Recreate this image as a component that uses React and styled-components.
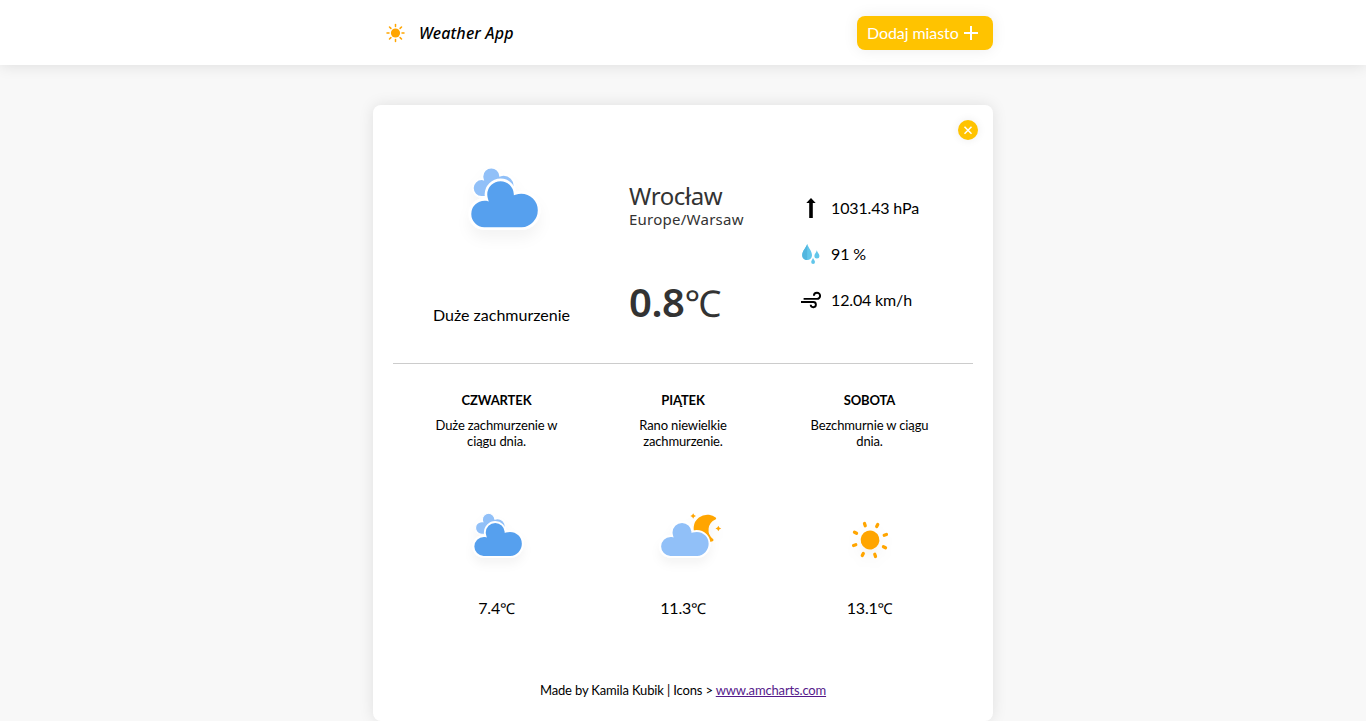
import React from "react";
import styled, { createGlobalStyle } from "styled-components";

const GlobalStyle = createGlobalStyle`
  *, *::before, *::after { box-sizing: border-box; }
  body {
    margin: 0;
    background: #f8f8f8;
    font-family: Lato, sans-serif;
    font-size: 16px;
    line-height: 19px;
    color: #000;
    overflow: hidden;
  }
  h1, h2, h3, p { margin: 0; font-weight: 400; }
  svg { display: block; flex: none; }
`;

const Header = styled.header`
  height: 65px;
  background: #fff;
  box-shadow: 0 0 15px rgba(0, 0, 0, 0.12);
`;

const HeaderInner = styled.div`
  width: 620px;
  height: 100%;
  margin: 0 auto;
  padding-left: 12px;
  display: flex;
  align-items: center;
  justify-content: space-between;
`;

const Brand = styled.div`
  display: flex;
  align-items: center;
  gap: 13px;
`;

const BrandName = styled.h1`
  font: italic 500 16px/20px "Noto Sans", sans-serif;
  letter-spacing: 0.17px;
  white-space: nowrap;
`;

const AddButton = styled.button`
  width: 136px;
  height: 34px;
  padding: 0 0 0 10px;
  border: 0;
  border-radius: 8px;
  background: #ffc300;
  box-shadow: 0 0 15px rgba(0, 0, 0, 0.08);
  color: #fff;
  font: 16px/19px Lato, sans-serif;
  letter-spacing: -0.08px;
  display: flex;
  align-items: center;
  gap: 4px;
  white-space: nowrap;
`;

const Card = styled.main`
  position: relative;
  width: 620px;
  height: 616px;
  margin: 40px auto 0;
  padding: 0 20px;
  border-radius: 8px;
  background: #fff;
  box-shadow: 0 0 15px rgba(0, 0, 0, 0.1);
`;

const CloseButton = styled.button`
  position: absolute;
  top: 15px;
  right: 15px;
  width: 20px;
  height: 20px;
  padding: 0;
  border: 0;
  border-radius: 50%;
  background: #ffc300;
  box-shadow: 0 0 10px rgba(0, 0, 0, 0.08);
  display: grid;
  place-items: center;
`;

const Current = styled.section`
  height: 259px;
  padding: 30px 0 0 40px;
  border-bottom: 1px solid #ccc;
  display: flex;
  align-items: flex-start;
`;

const Condition = styled.div`
  width: 140px;
  display: flex;
  flex-direction: column;
  align-items: center;
  gap: 30px;
  white-space: nowrap;

  p { margin-right: 3px; }
`;

const Place = styled.div`
  width: 172px;
  margin: 46px 0 0 56px;
  color: #333;
  font-family: "Noto Sans", sans-serif;
`;

const City = styled.h2`
  font-size: 24px;
  line-height: 29px;
  letter-spacing: -0.4px;
`;

const Zone = styled.p`
  font-size: 15px;
  line-height: 18px;
  letter-spacing: 0.25px;
`;

const Temperature = styled.p`
  margin-top: 51px;
  font-size: 40px;
  line-height: 46px;
  font-weight: 600;
  letter-spacing: -0.4px;
  white-space: nowrap;
`;

const Degree = styled.span`
  display: inline-block;
  font-family: "Noto Sans", sans-serif;
  font-size: ${({ $size }) => $size}px;
  line-height: 1;
  font-weight: 400;
`;

const Details = styled.div`
  margin-top: 63px;
  display: flex;
  flex-direction: column;
  gap: 26px;
`;

const Detail = styled.div`
  height: 20px;
  display: flex;
  align-items: center;
  gap: 10px;
  line-height: 18px;
  letter-spacing: -0.15px;
  white-space: nowrap;
`;

const Forecast = styled.section`
  padding: 27px 10px 0;
  display: grid;
  grid-template-columns: repeat(3, 186.5px);
  justify-content: center;
`;

const Day = styled.article`
  display: flex;
  flex-direction: column;
  align-items: center;
  text-align: center;
`;

const DayName = styled.h3`
  font-size: 13px;
  line-height: 18px;
  font-weight: 700;
  letter-spacing: -0.12px;
  text-transform: uppercase;
`;

const Summary = styled.p`
  width: 130px;
  height: 32px;
  margin: 8px 0 41px;
  font-size: 13px;
  line-height: 16px;
  letter-spacing: -0.14px;
`;

const DayTemp = styled.p`
  height: 19px;
  margin-top: 8px;
  letter-spacing: -0.2px;
  white-space: nowrap;
`;

const Footer = styled.footer`
  margin-top: 65px;
  text-align: center;
  font-size: 13px;
  line-height: 16px;
  letter-spacing: -0.15px;
`;

const FooterLink = styled.a`
  color: #551a8b;
  text-decoration: underline;
`;

const CLOUD =
  "M47.7,35.4c0-4.6-3.7-8.2-8.2-8.2c-1,0-1.9,0.2-2.8,0.5c-0.3-3.4-3.1-6.2-6.6-6.2c-3.7,0-6.7,3-6.7,6.7c0,0.8,0.2,1.6,0.4,2.3c-0.3-0.1-0.7-0.1-1-0.1c-3.7,0-6.7,3-6.7,6.7c0,3.6,2.9,6.6,6.5,6.7l17.2,0C44.2,43.6,47.7,39.8,47.7,35.4z";
const STAR = "0,-1.8 0.6,-0.6 1.8,0 0.6,0.6 0,1.8 -0.6,0.6 -1.8,0 -0.6,-0.6";
const RAYS = [0, 45, 90, 135, 180, 225, 270, 315];

function IconFrame({ id, size, children }) {
  return (
    <svg width={size} height={size} viewBox="0 0 64 64">
      <defs>
        <filter id={id} x="-30%" y="-30%" width="160%" height="180%">
          <feDropShadow dx="0" dy="4" stdDeviation="3" floodColor="#000" floodOpacity="0.045" />
        </filter>
      </defs>
      <g filter={`url(#${id})`}>{children}</g>
    </svg>
  );
}

function Cloudy({ id, size }) {
  return (
    <IconFrame id={id} size={size}>
      <path d={CLOUD} fill="#91c0f8" stroke="#fff" strokeWidth="1.2" transform="translate(8.6 2) scale(.6)" />
      <path d={CLOUD} fill="#57a0ee" stroke="#fff" strokeWidth="1.2" transform="translate(0.8 -1)" />
    </IconFrame>
  );
}

function CloudyNight({ id, size }) {
  return (
    <IconFrame id={id} size={size}>
      <path
        d="M14.5,13.2c0-3.7,2-6.9,5-8.7c-1.5-0.9-3.2-1.3-5-1.3c-5.5,0-10,4.5-10,10s4.5,10,10,10c1.8,0,3.5-0.5,5-1.3C16.5,20.2,14.5,16.9,14.5,13.2z"
        fill="orange"
        stroke="orange"
        strokeWidth="2"
        strokeLinejoin="round"
        transform="translate(47.6 24.6) rotate(7) scale(.8) translate(-14.5 -13.2)"
      />
      <polygon points={STAR} fill="orange" transform="translate(38.5 16.6)" />
      <polygon points={STAR} fill="orange" transform="translate(54.6 24.6)" />
      <path d={CLOUD} fill="#91c0f8" stroke="#fff" strokeWidth="1.2" transform="translate(1.3 -1)" />
    </IconFrame>
  );
}

function Sunny({ id, size }) {
  return (
    <IconFrame id={id} size={size}>
      <g transform="translate(32 32) rotate(26.5)" stroke="orange" strokeWidth="2" strokeLinecap="round">
        <circle r="5" fill="orange" />
        {RAYS.map((a) => (
          <line key={a} y1="9.6" y2="11.1" strokeWidth="2.1" transform={`rotate(${a})`} />
        ))}
      </g>
    </IconFrame>
  );
}

function LogoSun() {
  return (
    <svg width="21" height="20" viewBox="-10.5 -10 21 20">
      <circle r="4.6" fill="orange" />
      {RAYS.map((a) => (
        <line key={a} y1="6.5" y2="8.5" stroke="orange" strokeWidth="1.5" strokeLinecap="round" transform={`rotate(${a})`} />
      ))}
    </svg>
  );
}

function PlusIcon() {
  return (
    <svg width="16" height="16" viewBox="0 0 16 16" stroke="#fff" strokeWidth="2">
      <path d="M8 1v14M1 8h14" />
    </svg>
  );
}

function CloseIcon() {
  return (
    <svg width="10" height="10" viewBox="0 0 10 10" stroke="#fff" strokeWidth="1.5">
      <path d="M1.5 1.8l7 7M8.5 1.8l-7 7" />
    </svg>
  );
}

function PressureIcon() {
  return (
    <svg width="20" height="20" viewBox="0 0 20 20">
      <path d="M10 0l4.7 5h-2.900v15H8.200V5H5.300z" />
    </svg>
  );
}

function DropsIcon() {
  return (
    <svg width="20" height="20" viewBox="0 0 20 20">
      <path d="M6.2 0C7.4 4 11 7 11 11.2a4.9 4.9 0 0 1-9.8 0C1.2 7 5 4 6.2 0z" fill="#62c6ea" />
      <path d="M6.2 0C5 4 1.2 7 1.2 11.2a4.9 4.9 0 0 0 5 4.9z" fill="#52b6df" />
      <path d="M15.8 6.3c.6 2.5 2.6 3.7 2.6 5.7a2.5 2.5 0 0 1-5 0c0-2 1.9-3.2 2.4-5.7z" fill="#62c6ea" />
      <path d="M12 13.7c.5 1.8 2 2.9 2 4.3a1.9 1.9 0 0 1-3.8 0c0-1.4 1.4-2.5 1.8-4.3z" fill="#62c6ea" />
    </svg>
  );
}

function WindIcon() {
  return (
    <svg width="20" height="20" viewBox="0 0 20 20" fill="none" stroke="#000" strokeWidth="1.9">
      <path d="M2.6 8.9H16a3.100 3.100 0 1 0-3.100-3.100" />
      <path d="M0 12H12.300a2.600 2.600 0 1 1-2.600 2.800" />
    </svg>
  );
}

const days = [
  { name: "Czwartek", summary: "Duże zachmurzenie w ciągu dnia.", Icon: Cloudy, temp: "7.4" },
  { name: "Piątek", summary: "Rano niewielkie zachmurzenie.", Icon: CloudyNight, temp: "11.3" },
  { name: "Sobota", summary: "Bezchmurnie w ciągu dnia.", Icon: Sunny, temp: "13.1" },
];

export default function App() {
  return (
    <>
      <GlobalStyle />
      <Header>
        <HeaderInner>
          <Brand>
            <LogoSun />
            <BrandName>Weather App</BrandName>
          </Brand>
          <AddButton>
            Dodaj miasto
            <PlusIcon />
          </AddButton>
        </HeaderInner>
      </Header>
      <Card>
        <CloseButton aria-label="Usuń">
          <CloseIcon />
        </CloseButton>
        <Current>
          <Condition>
            <Cloudy id="current" size={140} />
            <p>Duże zachmurzenie</p>
          </Condition>
          <Place>
            <City>Wrocław</City>
            <Zone>Europe/Warsaw</Zone>
            <Temperature>
              0.8<Degree $size={37}>℃</Degree>
            </Temperature>
          </Place>
          <Details>
            <Detail>
              <PressureIcon />
              <span>1031.43 hPa</span>
            </Detail>
            <Detail>
              <DropsIcon />
              <span>91 %</span>
            </Detail>
            <Detail>
              <WindIcon />
              <span>12.04 km/h</span>
            </Detail>
          </Details>
        </Current>
        <Forecast>
          {days.map(({ name, summary, Icon, temp }) => (
            <Day key={name}>
              <DayName>{name}</DayName>
              <Summary>{summary}</Summary>
              <Icon id={name} size={100} />
              <DayTemp>
                {temp}
                <Degree $size={15}>℃</Degree>
              </DayTemp>
            </Day>
          ))}
        </Forecast>
        <Footer>
          Made by Kamila Kubik | Icons &gt; <FooterLink href="#">www.amcharts.com</FooterLink>
        </Footer>
      </Card>
    </>
  );
}
